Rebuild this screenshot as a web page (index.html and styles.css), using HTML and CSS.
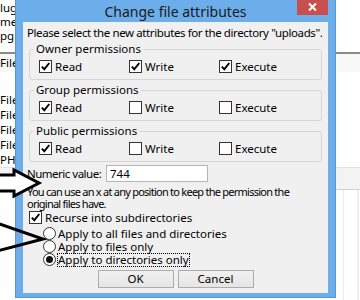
FILE: index.html
```html
<!DOCTYPE html>
<html>
<head>
<meta charset="utf-8">
<link rel="stylesheet" href="styles.css">
</head>
<body>
<div class="screen">
  <div class="app">
    <nav class="nav">
      <div class="nav-item">lug</div>
      <div class="nav-item">men</div>
      <div class="nav-item">pg</div>
    </nav>
    <div class="rule"></div>
    <div class="list">
      <div class="list-head">File</div>
      <div class="list-items">
        <div class="list-item">File</div>
        <div class="list-item">File</div>
        <div class="list-item">File</div>
        <div class="list-item">File</div>
        <div class="list-item">PHP</div>
      </div>
    </div>
    <div class="thead"></div>
    <div class="tbody"><span class="cell c1"></span><span class="cell c2"></span><span class="cell c3"></span></div>
  </div>

  <div class="dialog">
    <div class="titlebar">
      <span class="title">Change file attributes</span>
      <span class="close"><svg width="31" height="15" viewBox="0 0 31 15"><path d="M12 3.5 L19 10.5 M19 3.5 L12 10.5" stroke="#fff" stroke-width="2" fill="none"/></svg></span>
    </div>
    <div class="client">
      <p class="intro">Please select the new attributes for the directory "uploads".</p>

      <fieldset class="group">
        <legend>Owner permissions</legend>
        <div class="perm-row">
          <span class="check"><span class="box on"><svg width="11" height="11" viewBox="0 0 11 11"><path d="M1.8 5.6 L4.3 8.2 L9.3 2" stroke="#000" stroke-width="1.9" fill="none"/></svg></span>Read</span>
          <span class="check"><span class="box on"><svg width="11" height="11" viewBox="0 0 11 11"><path d="M1.8 5.6 L4.3 8.2 L9.3 2" stroke="#000" stroke-width="1.9" fill="none"/></svg></span>Write</span>
          <span class="check"><span class="box on"><svg width="11" height="11" viewBox="0 0 11 11"><path d="M1.8 5.6 L4.3 8.2 L9.3 2" stroke="#000" stroke-width="1.9" fill="none"/></svg></span>Execute</span>
        </div>
      </fieldset>

      <fieldset class="group">
        <legend>Group permissions</legend>
        <div class="perm-row">
          <span class="check"><span class="box on"><svg width="11" height="11" viewBox="0 0 11 11"><path d="M1.8 5.6 L4.3 8.2 L9.3 2" stroke="#000" stroke-width="1.9" fill="none"/></svg></span>Read</span>
          <span class="check"><span class="box"></span>Write</span>
          <span class="check"><span class="box"></span>Execute</span>
        </div>
      </fieldset>

      <fieldset class="group">
        <legend>Public permissions</legend>
        <div class="perm-row">
          <span class="check"><span class="box on"><svg width="11" height="11" viewBox="0 0 11 11"><path d="M1.8 5.6 L4.3 8.2 L9.3 2" stroke="#000" stroke-width="1.9" fill="none"/></svg></span>Read</span>
          <span class="check"><span class="box"></span>Write</span>
          <span class="check"><span class="box"></span>Execute</span>
        </div>
      </fieldset>

      <div class="numeric">
        <span class="numeric-label">Numeric value:</span>
        <span class="input">744</span>
      </div>
      <p class="hint">You can use an x at any position to keep the permission the<br>original files have.</p>

      <div class="check recurse"><span class="box on"><svg width="11" height="11" viewBox="0 0 11 11"><path d="M1.8 5.6 L4.3 8.2 L9.3 2" stroke="#000" stroke-width="1.9" fill="none"/></svg></span>Recurse into subdirectories</div>

      <div class="radios">
        <div class="radio"><span class="dot"></span>Apply to all files and directories</div>
        <div class="radio"><span class="dot"></span>Apply to files only</div>
        <div class="radio"><span class="dot on"></span><span class="focus">Apply to directories only</span></div>
      </div>

      <div class="buttons">
        <button class="btn">OK</button>
        <button class="btn">Cancel</button>
      </div>
    </div>
  </div>

  <svg class="arrows" width="60" height="300" viewBox="0 0 60 300">
    <path d="M-3 175 L14 175 L14 170 L39 183 L14 196 L14 191 L-3 191 Z" fill="#fff" stroke="#000" stroke-width="3" stroke-linejoin="miter"/>
    <path d="M-3 223 L43 239 L-3 251" fill="none" stroke="#000" stroke-width="3"/>
  </svg>
</div>
</body>
</html>
```

FILE: styles.css
```css
* { box-sizing: border-box; }
html, body { margin: 0; padding: 0; }
body {
  font-family: "Noto Sans", "Open Sans", sans-serif;
  font-size: 11.5px;
  color: #000;
  background: #fff;
}
.screen {
  position: relative;
  width: 360px;
  height: 300px;
  overflow: hidden;
}

/* background application */
.app {
  width: 360px;
  height: 300px;
  display: flex;
  flex-direction: column;
}
.nav {
  height: 52px;
  padding-top: 1px;
  display: flex;
  flex-direction: column;
}
.nav-item {
  height: 14px;
  line-height: 14px;
  white-space: nowrap;
}
.rule {
  height: 2px;
  background: #8a8a8a;
}
.list {
  flex: 1;
  display: flex;
  flex-direction: column;
}
.list-head {
  height: 18px;
  line-height: 18px;
  background: #f8f8f8;
}
.list-items {
  padding-top: 20px;
}
.list-item {
  height: 15px;
  line-height: 15px;
}
.thead {
  height: 23px;
  background: #f3f3f3;
  border-top: 1px solid #e2e2e2;
  border-bottom: 1px solid #cfcfcf;
}
.tbody {
  flex: 1;
  display: flex;
}
.cell {
  border-right: 1px solid #ececec;
}
.c1 { width: 344px; }
.c2 { width: 14px; }

/* dialog window */
.dialog {
  position: absolute;
  left: 15px;
  top: 0;
  width: 321px;
  height: 298px;
  background: #6caeea;
  border: 1px solid #5596d6;
  border-top: none;
  padding: 0 7px 4px 7px;
  display: flex;
  flex-direction: column;
}
.titlebar {
  height: 22px;
  display: grid;
  grid-template-columns: 1fr auto 1fr;
}
.title {
  grid-column: 2;
  align-self: center;
  padding-top: 2px;
  font-size: 14px;
  line-height: 18px;
  color: #1a1a1a;
  white-space: nowrap;
}
.close {
  grid-column: 3;
  justify-self: end;
  align-self: start;
  width: 31px;
  height: 15px;
  background: #c7504f;
  display: block;
}
.close svg { display: block; }

.client {
  flex: 1;
  background: #f0f0f0;
  padding-top: 4px;
  display: flex;
  flex-direction: column;
}
.intro {
  margin: 0 0 0 4px;
  line-height: 14px;
  letter-spacing: -0.4px;
  white-space: nowrap;
}
.group {
  margin: 2px 6px 0;
  padding: 4px 9px 6px 9px;
  border: 1px solid #d6d6d6;
  border-radius: 3px;
  min-width: 0;
}
.group + .group { margin-top: 3px; }
.group legend {
  margin-left: -5px;
  padding: 0 2px;
  line-height: 14px;
}
.perm-row {
  display: grid;
  grid-template-columns: 90px 90px 1fr;
  height: 13px;
}
.check {
  display: flex;
  align-items: center;
  gap: 3px;
  height: 13px;
  line-height: 13px;
  white-space: nowrap;
}
.box {
  width: 13px;
  height: 13px;
  flex: none;
  border: 1px solid #333;
  background: #fff;
  display: flex;
  align-items: center;
  justify-content: center;
}
.box svg { display: block; }

.numeric {
  margin: 3px 0 0 4px;
  display: flex;
  align-items: center;
  height: 17px;
}
.numeric-label {
  width: 79px;
  letter-spacing: -0.5px;
  white-space: nowrap;
}
.input {
  width: 102px;
  height: 17px;
  line-height: 15px;
  border: 1px solid #b5b5b5;
  background: #fff;
  padding-left: 3px;
}
.hint {
  margin: 4px 0 0 4px;
  font-size: 11px;
  line-height: 12px;
  letter-spacing: -0.75px;
  white-space: nowrap;
}
.recurse {
  margin: 1px 0 0 6px;
}
.radios {
  margin: 3px 0 0 20px;
  display: flex;
  flex-direction: column;
}
.radio {
  display: flex;
  align-items: center;
  gap: 2px;
  height: 13px;
  line-height: 13px;
  white-space: nowrap;
}
.dot {
  width: 13px;
  height: 13px;
  flex: none;
  border: 1px solid #333;
  border-radius: 50%;
  background: #fff;
  display: flex;
  align-items: center;
  justify-content: center;
}
.dot.on::after {
  content: "";
  width: 7px;
  height: 7px;
  border-radius: 50%;
  background: #111;
}
.focus {
  outline: 1px dotted #000;
  line-height: 12px;
}
.buttons {
  margin-top: 4px;
  display: flex;
  justify-content: center;
  gap: 4px;
}
.btn {
  width: 76px;
  height: 18px;
  padding: 0;
  font: inherit;
  line-height: 16px;
  color: #000;
  border: 1px solid #acacac;
  border-radius: 0;
  background: linear-gradient(#f0f0f0, #e5e5e5);
}

.arrows {
  position: absolute;
  left: 0;
  top: 0;
}
```
